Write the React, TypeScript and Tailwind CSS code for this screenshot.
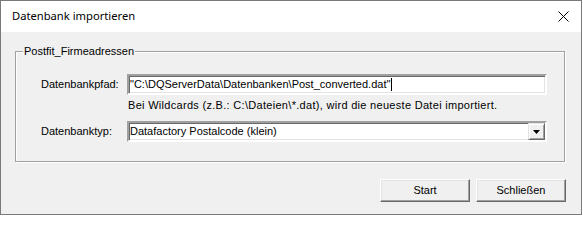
import React from "react";

const sans = { fontFamily: '"Liberation Sans", Arial, sans-serif' };

function CloseIcon() {
  return (
    <svg width="11" height="11" viewBox="0 0 11 11" className="block">
      <path d="M0.5 0.5 L10.5 10.5 M10.5 0.5 L0.5 10.5" stroke="#000" strokeWidth="1" />
    </svg>
  );
}

function DialogButton({ label }: { label: string }) {
  return (
    <button
      type="button"
      className="flex h-[23px] w-[90px] items-center justify-center border border-t-white border-l-white border-r-[#696969] border-b-[#696969] bg-[#f0f0f0] text-[11px] text-black shadow-[inset_-1px_-1px_0_#a0a0a0,inset_1px_1px_0_#e3e3e3]"
    >
      {label}
    </button>
  );
}

export default function App() {
  return (
    <div className="h-[219px] w-[583px] bg-white" style={sans}>
      <div className="flex h-[215px] w-[582px] flex-col border border-[#7a7a7a] bg-[#f0f0f0]">
        <div className="flex h-[31px] items-center justify-between bg-white pl-[11px] pr-[12px]">
          <span
            className="text-[11.2px] text-black"
            style={{ fontFamily: '"Noto Sans", "Open Sans", sans-serif' }}
          >
            Datenbank importieren
          </span>
          <CloseIcon />
        </div>

        <div className="flex flex-col px-[14px] pt-[19px]">
          <div className="relative h-[111px] w-[550px] border border-[#a0a0a0] pl-[25px] pt-[22px] shadow-[inset_1px_1px_0_#fff,1px_1px_0_#fff]">
            <span className="absolute left-[7px] top-[-8px] bg-[#f0f0f0] px-[1px] text-[11px] leading-[14px] text-black">
              Postfit_Firmeadressen
            </span>

            <div className="flex items-center">
              <span className="w-[86px] text-[11px] text-black">Datenbankpfad:</span>
              <div className="flex h-[21px] w-[420px] items-center border-2 border-t-[#a0a0a0] border-l-[#a0a0a0] border-r-white border-b-white bg-white pl-[1px] shadow-[inset_1px_1px_0_#696969,inset_-1px_-1px_0_#e3e3e3]">
                <span className="text-[11px] leading-[13px] text-black">
                  "C:\DQServerData\Datenbanken\Post_converted.dat"
                </span>
                <span className="ml-[1px] h-[13px] w-px bg-black" />
              </div>
            </div>

            <div className="ml-[87px] mt-[4px] text-[11px] leading-[13px] tracking-[0.3px] text-black">
              Bei Wildcards (z.B.: C:\Dateien\*.dat), wird die neueste Datei importiert.
            </div>

            <div className="mt-[9px] flex items-center">
              <span className="w-[86px] text-[11px] text-black">Datenbanktyp:</span>
              <div className="flex h-[21px] w-[420px] items-center border-2 border-t-[#a0a0a0] border-l-[#a0a0a0] border-r-white border-b-white bg-white shadow-[inset_1px_1px_0_#696969,inset_-1px_-1px_0_#e3e3e3]">
                <span className="flex-1 pl-[1px] text-[11px] leading-[13px] text-black">
                  Datafactory Postalcode (klein)
                </span>
                <div className="flex h-[17px] w-[17px] items-center justify-center border border-t-[#e3e3e3] border-l-[#e3e3e3] border-r-[#696969] border-b-[#696969] bg-[#f0f0f0] shadow-[inset_1px_1px_0_#fff,inset_-1px_-1px_0_#a0a0a0]">
                  <svg width="7" height="4" viewBox="0 0 7 4" className="block">
                    <polygon points="0,0 7,0 3.5,4" fill="#000" />
                  </svg>
                </div>
              </div>
            </div>
          </div>

          <div className="mt-[17px] flex justify-end gap-[6px] pr-[1px]">
            <DialogButton label="Start" />
            <DialogButton label="Schließen" />
          </div>
        </div>
      </div>
    </div>
  );
}
